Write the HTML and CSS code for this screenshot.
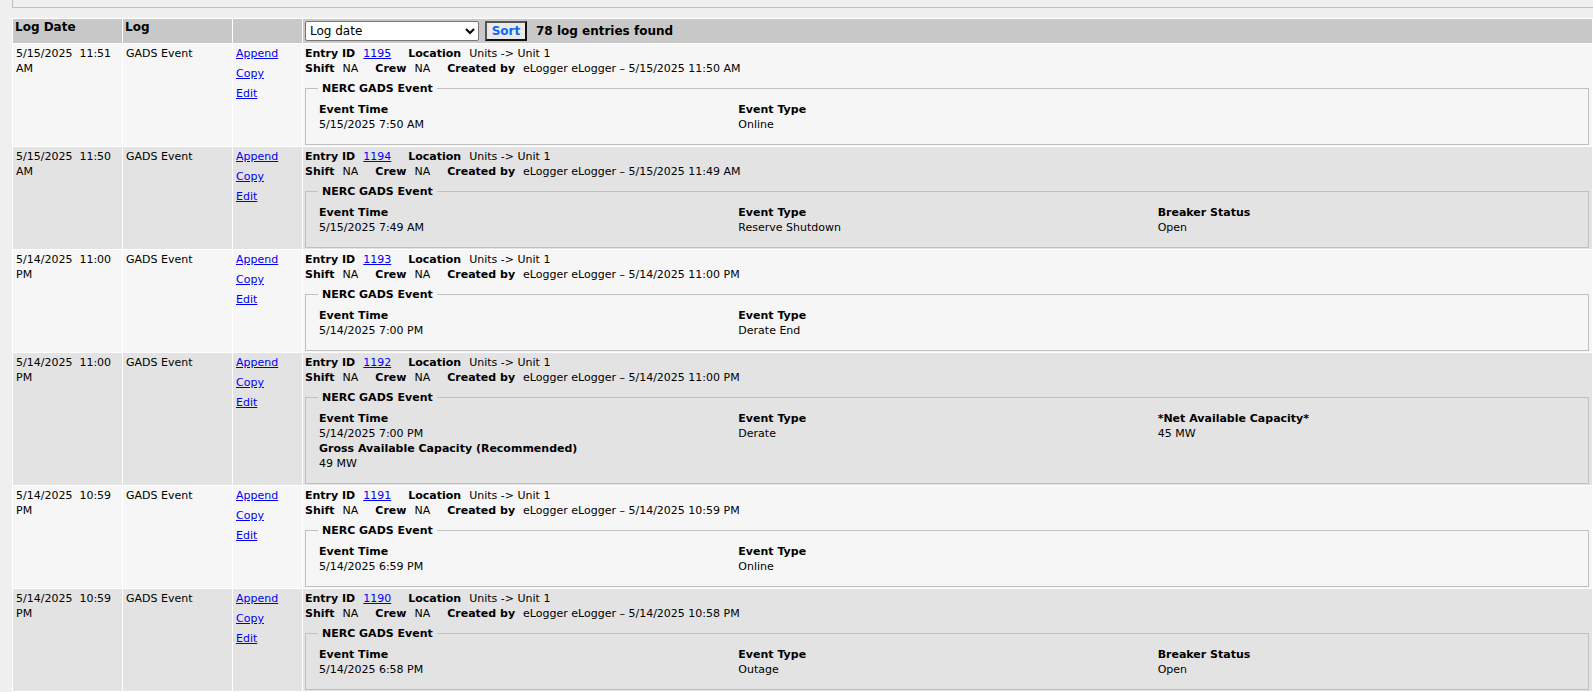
FILE: index.html
```html
<!DOCTYPE html>
<html>
<head>
<meta charset="utf-8">
<title>Log</title>
<link rel="stylesheet" href="styles.css">
</head>
<body>
<div class="topbox"></div>
<table class="log">
  <colgroup>
    <col class="c-date">
    <col class="c-log">
    <col class="c-act">
    <col>
  </colgroup>
  <thead>
    <tr>
      <th>Log Date</th>
      <th>Log</th>
      <th></th>
      <th class="tools">
        <div class="toolbar">
          <select class="sortsel"><option>Log date</option><option>Entry ID</option></select>
          <button class="sortbtn" type="button">Sort</button>
          <span class="count">78 log entries found</span>
        </div>
      </th>
    </tr>
  </thead>
  <tbody>
    <tr class="odd">
      <td>5/15/2025&nbsp; 11:51 AM</td>
      <td>GADS Event</td>
      <td class="acts"><a href="#">Append</a><a href="#">Copy</a><a href="#">Edit</a></td>
      <td class="entry">
        <div class="meta"><span class="pair"><b>Entry ID</b><a href="#">1195</a></span><span class="pair"><b>Location</b>Units -&gt; Unit 1</span></div>
        <div class="meta"><span class="pair"><b>Shift</b>NA</span><span class="pair"><b>Crew</b>NA</span><span class="pair"><b>Created by</b>eLogger eLogger – 5/15/2025 11:50 AM</span></div>
        <fieldset>
          <legend>NERC GADS Event</legend>
          <div class="fields">
            <div><b>Event Time</b><span>5/15/2025 7:50 AM</span></div>
            <div><b>Event Type</b><span>Online</span></div>
          </div>
        </fieldset>
      </td>
    </tr>
    <tr class="even">
      <td>5/15/2025&nbsp; 11:50 AM</td>
      <td>GADS Event</td>
      <td class="acts"><a href="#">Append</a><a href="#">Copy</a><a href="#">Edit</a></td>
      <td class="entry">
        <div class="meta"><span class="pair"><b>Entry ID</b><a href="#">1194</a></span><span class="pair"><b>Location</b>Units -&gt; Unit 1</span></div>
        <div class="meta"><span class="pair"><b>Shift</b>NA</span><span class="pair"><b>Crew</b>NA</span><span class="pair"><b>Created by</b>eLogger eLogger – 5/15/2025 11:49 AM</span></div>
        <fieldset>
          <legend>NERC GADS Event</legend>
          <div class="fields">
            <div><b>Event Time</b><span>5/15/2025 7:49 AM</span></div>
            <div><b>Event Type</b><span>Reserve Shutdown</span></div>
            <div><b>Breaker Status</b><span>Open</span></div>
          </div>
        </fieldset>
      </td>
    </tr>
    <tr class="odd">
      <td>5/14/2025&nbsp; 11:00 PM</td>
      <td>GADS Event</td>
      <td class="acts"><a href="#">Append</a><a href="#">Copy</a><a href="#">Edit</a></td>
      <td class="entry">
        <div class="meta"><span class="pair"><b>Entry ID</b><a href="#">1193</a></span><span class="pair"><b>Location</b>Units -&gt; Unit 1</span></div>
        <div class="meta"><span class="pair"><b>Shift</b>NA</span><span class="pair"><b>Crew</b>NA</span><span class="pair"><b>Created by</b>eLogger eLogger – 5/14/2025 11:00 PM</span></div>
        <fieldset>
          <legend>NERC GADS Event</legend>
          <div class="fields">
            <div><b>Event Time</b><span>5/14/2025 7:00 PM</span></div>
            <div><b>Event Type</b><span>Derate End</span></div>
          </div>
        </fieldset>
      </td>
    </tr>
    <tr class="even">
      <td>5/14/2025&nbsp; 11:00 PM</td>
      <td>GADS Event</td>
      <td class="acts"><a href="#">Append</a><a href="#">Copy</a><a href="#">Edit</a></td>
      <td class="entry">
        <div class="meta"><span class="pair"><b>Entry ID</b><a href="#">1192</a></span><span class="pair"><b>Location</b>Units -&gt; Unit 1</span></div>
        <div class="meta"><span class="pair"><b>Shift</b>NA</span><span class="pair"><b>Crew</b>NA</span><span class="pair"><b>Created by</b>eLogger eLogger – 5/14/2025 11:00 PM</span></div>
        <fieldset>
          <legend>NERC GADS Event</legend>
          <div class="fields">
            <div><b>Event Time</b><span>5/14/2025 7:00 PM</span></div>
            <div><b>Event Type</b><span>Derate</span></div>
            <div><b>*Net Available Capacity*</b><span>45 MW</span></div>
            <div><b>Gross Available Capacity (Recommended)</b><span>49 MW</span></div>
          </div>
        </fieldset>
      </td>
    </tr>
    <tr class="odd">
      <td>5/14/2025&nbsp; 10:59 PM</td>
      <td>GADS Event</td>
      <td class="acts"><a href="#">Append</a><a href="#">Copy</a><a href="#">Edit</a></td>
      <td class="entry">
        <div class="meta"><span class="pair"><b>Entry ID</b><a href="#">1191</a></span><span class="pair"><b>Location</b>Units -&gt; Unit 1</span></div>
        <div class="meta"><span class="pair"><b>Shift</b>NA</span><span class="pair"><b>Crew</b>NA</span><span class="pair"><b>Created by</b>eLogger eLogger – 5/14/2025 10:59 PM</span></div>
        <fieldset>
          <legend>NERC GADS Event</legend>
          <div class="fields">
            <div><b>Event Time</b><span>5/14/2025 6:59 PM</span></div>
            <div><b>Event Type</b><span>Online</span></div>
          </div>
        </fieldset>
      </td>
    </tr>
    <tr class="even">
      <td>5/14/2025&nbsp; 10:59 PM</td>
      <td>GADS Event</td>
      <td class="acts"><a href="#">Append</a><a href="#">Copy</a><a href="#">Edit</a></td>
      <td class="entry">
        <div class="meta"><span class="pair"><b>Entry ID</b><a href="#">1190</a></span><span class="pair"><b>Location</b>Units -&gt; Unit 1</span></div>
        <div class="meta"><span class="pair"><b>Shift</b>NA</span><span class="pair"><b>Crew</b>NA</span><span class="pair"><b>Created by</b>eLogger eLogger – 5/14/2025 10:58 PM</span></div>
        <fieldset>
          <legend>NERC GADS Event</legend>
          <div class="fields">
            <div><b>Event Time</b><span>5/14/2025 6:58 PM</span></div>
            <div><b>Event Type</b><span>Outage</span></div>
            <div><b>Breaker Status</b><span>Open</span></div>
          </div>
        </fieldset>
      </td>
    </tr>
  </tbody>
</table>
</body>
</html>
```

FILE: styles.css
```css
html, body {
  margin: 0;
  padding: 0;
  background: #f0f0f0;
  font-family: "DejaVu Sans", Verdana, sans-serif;
  font-size: 11px;
  color: #000;
}

.topbox {
  height: 7px;
  margin-left: 12px;
  border-left: 1px solid #c0c0c0;
  border-bottom: 1px solid #c0c0c0;
  margin-bottom: 10px;
}

.log {
  margin-left: 12px;
  width: calc(100% - 12px);
  table-layout: fixed;
  border-collapse: separate;
  border-spacing: 1px;
  background: #fff;
}

.c-date { width: 109px; }
.c-log { width: 109px; }
.c-act { width: 69px; }

.log th {
  background: #c8c8c8;
  font-size: 12px;
  font-weight: bold;
  line-height: 14px;
  text-align: left;
  vertical-align: top;
  padding: 1px 2px;
}

.log th.tools {
  padding: 2px 2px;
}

.toolbar {
  display: flex;
  align-items: center;
  height: 20px;
}

.sortsel {
  width: 174px;
  height: 20px;
  font-family: "DejaVu Sans", Verdana, sans-serif;
  font-size: 12px;
  color: #000;
  background: #fff;
  border: 1px solid #767676;
  border-radius: 2px;
  margin: 0;
}

.sortbtn {
  margin: 0 0 0 6px;
  width: 42px;
  height: 20px;
  padding: 0;
  font-family: "DejaVu Sans", Verdana, sans-serif;
  font-size: 12px;
  font-weight: bold;
  color: #0a6af0;
  background: #e9e9e9;
  border: 2px solid;
  border-color: #555 #111 #111 #555;
  border-radius: 0;
}

.count {
  margin-left: 9px;
  font-size: 12px;
  font-weight: bold;
}

.log td {
  vertical-align: top;
  padding: 2px 3px 1px;
  line-height: 15px;
}

.odd td { background: #f6f6f6; }
.even td { background: #e3e3e3; }

a {
  color: #0000ee;
  text-decoration: underline;
}

.acts a {
  display: block;
  margin-bottom: 5px;
  width: max-content;
}

.log td.entry {
  padding: 2px 2px 1px 2px;
}

.meta {
  white-space: nowrap;
}

.pair {
  margin-right: 17px;
}

.pair b {
  margin-right: 8px;
}

fieldset {
  margin: 6px 1px 0 0;
  padding: 7px 12px 12px;
  border: 1px solid #c0c0c0;
  min-width: 0;
}

legend {
  padding: 0 4px;
  font-weight: bold;
  line-height: 13px;
}

.fields {
  display: grid;
  grid-template-columns: 1fr 1fr 1fr;
}

.fields > div {
  display: flex;
  flex-direction: column;
  padding-left: 1px;
}
```
